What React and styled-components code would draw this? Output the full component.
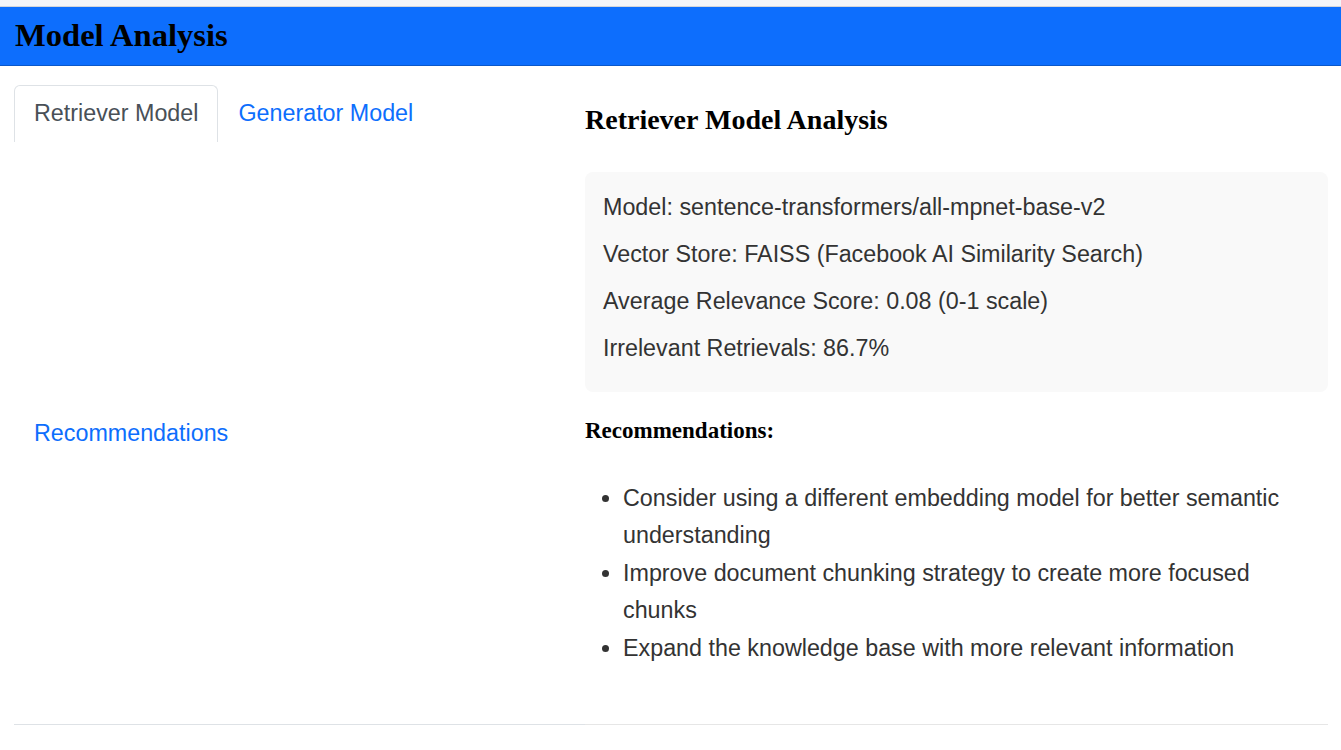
import React from "react";
import styled, { createGlobalStyle } from "styled-components";

const Global = createGlobalStyle`
  html, body { margin: 0; padding: 0; background: #fff; }
  body { font-family: "Liberation Sans", Arial, sans-serif; color: #333; }
  * { box-sizing: border-box; }
`;

const TopStrip = styled.div`
  height: 7px;
  background: #f4f5f9;
  border-bottom: 1px solid #d3d5da;
`;

const Header = styled.header`
  height: 59px;
  background: #0d6efd;
  border-bottom: 1px solid #0a58ca;
  display: flex;
  align-items: center;
  padding: 0 15px;
`;

const Title = styled.h1`
  margin: 0;
  font-family: "Liberation Serif", "Times New Roman", serif;
  font-weight: 700;
  font-size: 32.6px;
  line-height: 1.15;
  color: #000;
`;

const Body = styled.main`
  display: grid;
  grid-template-columns: 571px 1fr;
  padding: 19px 13px 0 14px;
  align-items: stretch;
`;

const Nav = styled.ul`
  list-style: none;
  margin: 0;
  padding: 0;
  display: flex;
  flex-wrap: wrap;
  border-bottom: 1px solid #dee2e6;
`;

const NavItem = styled.li`
  display: block;
`;

const NavLink = styled.a`
  display: block;
  padding: 13px 19px 15px;
  font-size: 23.3px;
  line-height: 28px;
  text-decoration: none;
  cursor: pointer;
  border: 1px solid ${(p) => (p.$active ? "#dee2e6" : "transparent")};
  border-bottom: none;
  border-top-left-radius: 6px;
  border-top-right-radius: 6px;
  color: ${(p) => (p.$active ? "#495057" : "#0d6efd")};
  background: #fff;
`;

const Content = styled.section`
  padding: 0 0 57px 0;
  border-bottom: 1px solid #e6e6e6;
`;

const SectionTitle = styled.h3`
  margin: 18px 0 35px;
  font-family: "Liberation Serif", "Times New Roman", serif;
  font-weight: 700;
  font-size: 28px;
  line-height: 33.6px;
  color: #000;
`;

const InfoBox = styled.div`
  background: #f9f9f9;
  border-radius: 8px;
  padding: 18.6px 18px 13.4px;
`;

const InfoLine = styled.p`
  margin: 0 0 12.2px;
  font-size: 23.3px;
  line-height: 34.8px;
  color: #333;
`;

const SubTitle = styled.h4`
  margin: 25px 0 35.5px;
  font-family: "Liberation Serif", "Times New Roman", serif;
  font-weight: 700;
  font-size: 23px;
  line-height: 27.6px;
  color: #000;
`;

const List = styled.ul`
  margin: 0;
  padding: 0 20px 0 38px;
`;

const ListItem = styled.li`
  font-size: 23.3px;
  line-height: 37.5px;
  color: #333;
`;

const tabs = [
  { label: "Retriever Model", active: true },
  { label: "Generator Model" },
  { label: "Recommendations" },
];

const info = [
  "Model: sentence-transformers/all-mpnet-base-v2",
  "Vector Store: FAISS (Facebook AI Similarity Search)",
  "Average Relevance Score: 0.08 (0-1 scale)",
  "Irrelevant Retrievals: 86.7%",
];

const recs = [
  "Consider using a different embedding model for better semantic understanding",
  "Improve document chunking strategy to create more focused chunks",
  "Expand the knowledge base with more relevant information",
];

export default function App() {
  return (
    <>
      <Global />
      <TopStrip />
      <Header>
        <Title>Model Analysis</Title>
      </Header>
      <Body>
        <Nav>
          {tabs.map((t) => (
            <NavItem key={t.label}>
              <NavLink $active={t.active}>{t.label}</NavLink>
            </NavItem>
          ))}
        </Nav>
        <Content>
          <SectionTitle>Retriever Model Analysis</SectionTitle>
          <InfoBox>
            {info.map((l) => (
              <InfoLine key={l}>{l}</InfoLine>
            ))}
          </InfoBox>
          <SubTitle>Recommendations:</SubTitle>
          <List>
            {recs.map((r) => (
              <ListItem key={r}>{r}</ListItem>
            ))}
          </List>
        </Content>
      </Body>
    </>
  );
}
